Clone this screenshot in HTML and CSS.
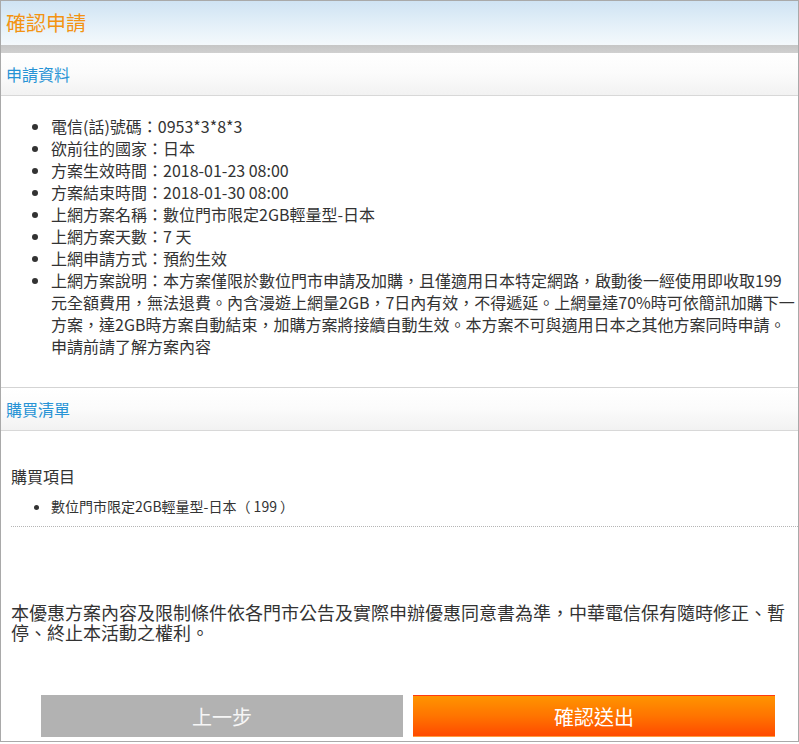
FILE: index.html
```html
<!DOCTYPE html>
<html lang="zh-Hant">
<head>
<meta charset="utf-8">
<title>確認申請</title>
<link rel="stylesheet" href="styles.css">
</head>
<body>
<div class="page">
  <header class="page-header"><h1 class="page-title">確認申請</h1></header>
  <div class="divider"></div>

  <section class="panel">
    <h2 class="panel-title">申請資料</h2>
    <div class="panel-body">
      <ul class="info-list">
        <li>電信(話)號碼：0953*3*8*3</li>
        <li>欲前往的國家：日本</li>
        <li>方案生效時間：2018-01-23 08:00</li>
        <li>方案結束時間：2018-01-30 08:00</li>
        <li>上網方案名稱：數位門市限定2GB輕量型-日本</li>
        <li>上網方案天數：7 天</li>
        <li>上網申請方式：預約生效</li>
        <li>上網方案說明：本方案僅限於數位門市申請及加購，且僅適用日本特定網路，啟動後一經使用即收取199元全額費用，無法退費。內含漫遊上網量2GB，7日內有效，不得遞延。上網量達70%時可依簡訊加購下一方案，達2GB時方案自動結束，加購方案將接續自動生效。本方案不可與適用日本之其他方案同時申請。申請前請了解方案內容</li>
      </ul>
    </div>
  </section>

  <section class="panel">
    <h2 class="panel-title panel-title--top">購買清單</h2>
    <div class="panel-body">
      <h3 class="items-title">購買項目</h3>
      <ul class="item-list">
        <li>數位門市限定2GB輕量型-日本（ 199 ）</li>
      </ul>
      <p class="notice">本優惠方案內容及限制條件依各門市公告及實際申辦優惠同意書為準，中華電信保有隨時修正、暫停、終止本活動之權利。</p>
      <div class="actions">
        <button class="btn btn-back" type="button">上一步</button>
        <button class="btn btn-submit" type="button">確認送出</button>
      </div>
    </div>
  </section>
</div>
</body>
</html>
```

FILE: styles.css
```css
* { box-sizing: border-box; }

html, body {
  margin: 0;
  padding: 0;
  background: #fff;
}

body {
  font-family: "Noto Sans CJK TC", "Noto Sans", sans-serif;
  color: #333;
}

.page {
  width: 799px;
  border: 1px solid #a9a9a9;
  padding-bottom: 4px;
  background: #fff;
}

.page-header {
  height: 44px;
  display: flex;
  align-items: center;
  padding-left: 5px;
  background: linear-gradient(to bottom, #cfe3f3 0%, #e6f1f9 60%, #f4f9fc 100%);
}

.page-title {
  margin: 0;
  font-size: 20px;
  font-weight: normal;
  line-height: 24px;
  color: #f39312;
}

.divider {
  height: 8px;
  background: linear-gradient(to bottom, #c6c6c6, #d0d0d0);
}

.panel-title {
  margin: 0;
  height: 43px;
  display: flex;
  align-items: center;
  padding-left: 5px;
  font-size: 16px;
  font-weight: normal;
  color: #2793d5;
  background: linear-gradient(to bottom, #ffffff 0%, #fbfbfb 50%, #f2f2f2 100%);
  border-bottom: 1px solid #d8d8d8;
}

.panel-title--top {
  height: 44px;
  border-top: 1px solid #d4d4d4;
}

.panel-body {
  padding-left: 10px;
}

.info-list {
  margin: 0 2px 0 0;
  padding: 19px 0 30px 40px;
  font-size: 16px;
  line-height: 22px;
  color: #333;
}

.items-title {
  margin: 0;
  padding-top: 34px;
  font-size: 16px;
  font-weight: normal;
  line-height: 22px;
  color: #333;
}

.item-list {
  margin: 9px 0 0 0;
  padding: 0 0 10px 40px;
  font-size: 14px;
  line-height: 20px;
  color: #333;
  border-bottom: 1px dotted #b5b5b5;
}

.notice {
  margin: 75px 0 0 0;
  font-size: 18px;
  line-height: 20px;
  color: #333;
}

.actions {
  display: flex;
  gap: 10px;
  margin-top: 53px;
  padding-left: 30px;
}

.btn {
  width: 362px;
  height: 42px;
  border: 0;
  padding: 0;
  font-family: "Noto Sans CJK TC", "Noto Sans", sans-serif;
  font-size: 20px;
  color: #fff;
  cursor: pointer;
}

.btn-back {
  background: #b2b2b2;
  color: #f6f6f6;
}

.btn-submit {
  background: linear-gradient(to bottom, #ff9400 0%, #ff7400 50%, #ff4a00 100%);
  border-top: 1px solid #ff3a10;
  border-bottom: 1px solid #ff9c40;
}
```
